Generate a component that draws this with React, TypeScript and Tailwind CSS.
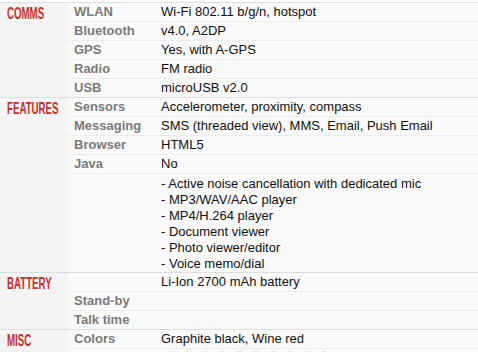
import React from 'react';

type Spec = { name: string; value: string[] };
type Group = { title: string; specs: Spec[] };

const groups: Group[] = [
  {
    title: 'COMMS',
    specs: [
      { name: 'WLAN', value: ['Wi-Fi 802.11 b/g/n, hotspot'] },
      { name: 'Bluetooth', value: ['v4.0, A2DP'] },
      { name: 'GPS', value: ['Yes, with A-GPS'] },
      { name: 'Radio', value: ['FM radio'] },
      { name: 'USB', value: ['microUSB v2.0'] },
    ],
  },
  {
    title: 'FEATURES',
    specs: [
      { name: 'Sensors', value: ['Accelerometer, proximity, compass'] },
      { name: 'Messaging', value: ['SMS (threaded view), MMS, Email, Push Email'] },
      { name: 'Browser', value: ['HTML5'] },
      { name: 'Java', value: ['No'] },
      {
        name: '',
        value: [
          '- Active noise cancellation with dedicated mic',
          '- MP3/WAV/AAC player',
          '- MP4/H.264 player',
          '- Document viewer',
          '- Photo viewer/editor',
          '- Voice memo/dial',
        ],
      },
    ],
  },
  {
    title: 'BATTERY',
    specs: [
      { name: '', value: ['Li-Ion 2700 mAh battery'] },
      { name: 'Stand-by', value: [''] },
      { name: 'Talk time', value: [''] },
    ],
  },
  {
    title: 'MISC',
    specs: [
      { name: 'Colors', value: ['Graphite black, Wine red'] },
      { name: '', value: ['dots'] },
    ],
  },
];

const Dots = () => (
  <div className="flex gap-[7px] pl-[5px]">
    {Array.from({ length: 10 }).map((_, i) => (
      <span key={i} className="block w-[10px] h-[10px] rounded-full border border-[#d9e4cf] bg-[#f5f8f2]" />
    ))}
  </div>
);

export default function App() {
  return (
    <div className="w-[478px] h-[352px] overflow-hidden bg-white pt-[2px] font-['Liberation_Sans',Arial,sans-serif] text-[13px]">
      {groups.map((g) => (
        <div key={g.title} className="flex border-t border-[#dedede]">
          <div className="w-[68px] shrink-0 bg-[#f4f4f4] pl-[7px] pt-[2px] overflow-hidden">
            <span className="inline-block whitespace-nowrap text-[17px] leading-[17px] font-bold text-[#c1312c] scale-x-[0.57] origin-left">
              {g.title}
            </span>
          </div>
          <div className="flex-1 bg-[#fafafa]">
            {g.specs.map((s, i) => (
              <div key={i} className={`flex ${i > 0 ? 'border-t border-[#ececec]' : ''}`}>
                <div className="w-[93px] shrink-0 pl-[6px] py-[2px] leading-[14px] font-bold text-[#7b7b7b]">
                  {s.name}
                </div>
                <div className={`flex-1 text-[#111] ${s.value.length > 1 ? 'pt-[2px]' : 'py-[2px] leading-[14px]'}`}>
                  {s.value[0] === 'dots' ? (
                    <Dots />
                  ) : s.value.length > 1 ? (
                    s.value.map((v) => (
                      <div key={v} className="leading-[16px]">
                        {v}
                      </div>
                    ))
                  ) : (
                    <span className="block min-h-[14px]">{s.value[0]}</span>
                  )}
                </div>
              </div>
            ))}
          </div>
        </div>
      ))}
    </div>
  );
}
